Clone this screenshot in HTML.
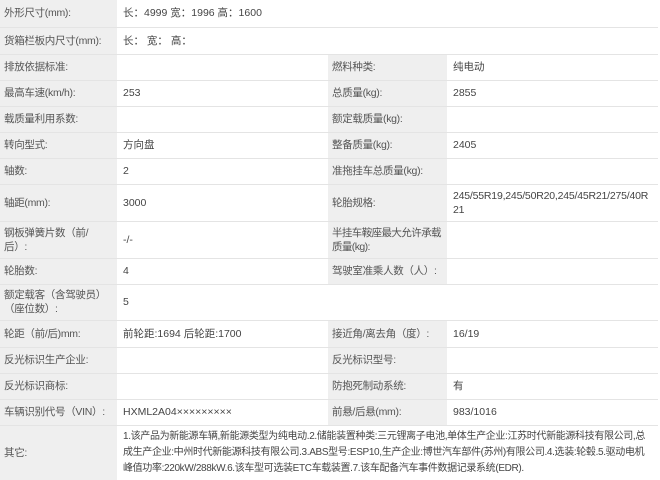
<!DOCTYPE html>
<html><head><meta charset="utf-8"><style>
html,body{margin:0;padding:0;background:#fff;width:660px;height:480px;overflow:hidden}
table{border-collapse:collapse;table-layout:fixed;width:658px;font-family:"Liberation Sans","Noto Sans CJK SC",sans-serif;font-size:10.5px;color:#444}
td{border-bottom:1px solid #e4e4e4;padding:0 3px 0 4px;vertical-align:middle;line-height:14px;overflow:hidden}
td.l{background:#efefef;color:#555;letter-spacing:-0.3px}
td.v{padding-left:6px}
.n{white-space:nowrap}
</style></head><body>
<table>
<colgroup><col style="width:117px"><col style="width:211px"><col style="width:119px"><col style="width:211px"></colgroup>
<tr style="height:27px"><td class="l n">外形尺寸(mm):</td><td class="v" colspan="3">长：4999 宽：1996 高：1600</td></tr>
<tr style="height:27px"><td class="l n">货箱栏板内尺寸(mm):</td><td class="v" colspan="3">长： 宽： 高：</td></tr>
<tr style="height:26px"><td class="l n">排放依据标准:</td><td class="v"></td><td class="l n">燃料种类:</td><td class="v">纯电动</td></tr>
<tr style="height:26px"><td class="l n">最高车速(km/h):</td><td class="v">253</td><td class="l n">总质量(kg):</td><td class="v">2855</td></tr>
<tr style="height:26px"><td class="l n">载质量利用系数:</td><td class="v"></td><td class="l n">额定载质量(kg):</td><td class="v"></td></tr>
<tr style="height:26px"><td class="l n">转向型式:</td><td class="v">方向盘</td><td class="l n">整备质量(kg):</td><td class="v">2405</td></tr>
<tr style="height:26px"><td class="l n">轴数:</td><td class="v">2</td><td class="l n">准拖挂车总质量(kg):</td><td class="v"></td></tr>
<tr style="height:37px"><td class="l n">轴距(mm):</td><td class="v">3000</td><td class="l n">轮胎规格:</td><td class="v" style="letter-spacing:-0.2px">245/55R19,245/50R20,245/45R21/275/40R<br>21</td></tr>
<tr style="height:37px"><td class="l n">钢板弹簧片数（前/<br>后）:</td><td class="v">-/-</td><td class="l n" style="letter-spacing:-0.6px">半挂车鞍座最大允许承载<br>质量(kg):</td><td class="v"></td></tr>
<tr style="height:26px"><td class="l n">轮胎数:</td><td class="v">4</td><td class="l n">驾驶室准乘人数（人）:</td><td class="v"></td></tr>
<tr style="height:36px"><td class="l n">额定载客（含驾驶员）<br>（座位数）:</td><td class="v" colspan="3">5</td></tr>
<tr style="height:27px"><td class="l n">轮距（前/后)mm:</td><td class="v">前轮距:1694 后轮距:1700</td><td class="l n">接近角/离去角（度）:</td><td class="v">16/19</td></tr>
<tr style="height:26px"><td class="l n">反光标识生产企业:</td><td class="v"></td><td class="l n">反光标识型号:</td><td class="v"></td></tr>
<tr style="height:26px"><td class="l n">反光标识商标:</td><td class="v"></td><td class="l n">防抱死制动系统:</td><td class="v">有</td></tr>
<tr style="height:26px"><td class="l n">车辆识别代号（VIN）:</td><td class="v">HXML2A04×××××××××</td><td class="l n">前悬/后悬(mm):</td><td class="v">983/1016</td></tr>
<tr style="height:56px"><td class="l n">其它:</td><td class="v n" colspan="3" style="line-height:16px;letter-spacing:-0.35px;font-size:10px">1.该产品为新能源车辆,新能源类型为纯电动.2.储能装置种类:三元锂离子电池,单体生产企业:江苏时代新能源科技有限公司,总<br>成生产企业:中州时代新能源科技有限公司.3.ABS型号:ESP10,生产企业:博世汽车部件(苏州)有限公司.4.选装:轮毂.5.驱动电机<br>峰值功率:220kW/288kW.6.该车型可选装ETC车载装置.7.该车配备汽车事件数据记录系统(EDR).</td></tr>
</table>
</body></html>
